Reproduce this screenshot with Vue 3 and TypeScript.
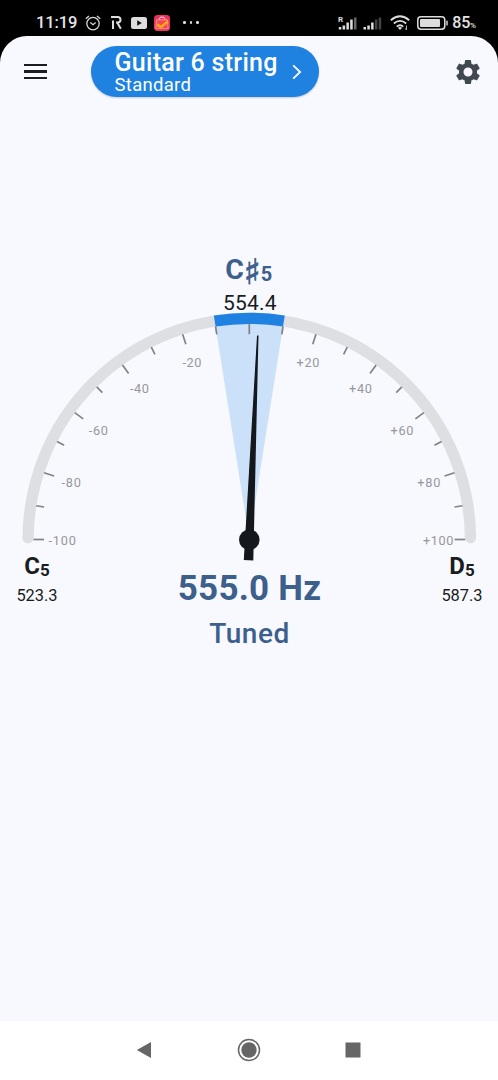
<script setup lang="ts">
interface Tick {
  value: number
  x1: number
  y1: number
  x2: number
  y2: number
}
interface ScaleLabel {
  text: string
  x: number
  y: number
  width: number
}

const cx = 249.3
const cy = 299.5
const radius = 221.2
const tickOuter = 215.8

function polar(cents: number, r: number): { x: number; y: number } {
  const a = (cents * 0.9 * Math.PI) / 180
  return { x: cx + r * Math.sin(a), y: cy + r * -Math.cos(a) }
}

function arc(from: number, to: number, r: number): string {
  const p = polar(from, r)
  const q = polar(to, r)
  return `M${p.x} ${p.y}A${r} ${r} 0 0 1 ${q.x} ${q.y}`
}

const ticks: Tick[] = Array.from({ length: 21 }, (_, i) => {
  const value = -100 + i * 10
  const length = value % 20 === 0 ? 10.5 : 8
  const p = polar(value, tickOuter)
  const q = polar(value, tickOuter - length)
  return { value, x1: p.x, y1: p.y, x2: q.x, y2: q.y }
})

const labels: ScaleLabel[] = [
  { text: '-20', x: 182.5, y: 126.5, width: 19 },
  { text: '-40', x: 130, y: 153, width: 19 },
  { text: '-60', x: 88.8, y: 194.5, width: 19 },
  { text: '-80', x: 61.5, y: 247, width: 19.5 },
  { text: '-100', x: 48.5, y: 305, width: 27.5 },
  { text: '+20', x: 296.5, y: 126.5, width: 23 },
  { text: '+40', x: 349, y: 153, width: 23 },
  { text: '+60', x: 390.5, y: 194.5, width: 23 },
  { text: '+80', x: 417.3, y: 247, width: 23 },
  { text: '+100', x: 423, y: 305, width: 30.5 },
]

const left = polar(-10, tickOuter)
const right = polar(10, tickOuter)
const sector = `M${cx} ${cy}L${left.x} ${left.y}A${tickOuter} ${tickOuter} 0 0 1 ${right.x} ${right.y}Z`
const barHeights = [4, 6, 9, 12, 14]
</script>

<template>
  <div class="phone">
    <header class="status">
      <span class="time">11:19</span>
      <svg class="alarm" width="16" height="16" viewBox="0 0 16 16" fill="none" stroke="#d8d8d8" stroke-width="1.3">
        <circle cx="8" cy="8.6" r="6.2" />
        <path d="M.8 3.7 4 1M12 1l3.2 2.7M5.3 7.6 8 9.7l2.7-2.1" />
      </svg>
      <svg class="rmark" width="11" height="13" viewBox="0 0 11 13" fill="none" stroke="#ddd" stroke-width="2">
        <path d="M0 1h6.7a2.7 2.7 0 0 1 0 5.6H5M2 4.5V13M6.2 6.6 9.8 12.8" />
      </svg>
      <svg class="video" width="16" height="12" viewBox="0 0 16 12">
        <rect width="16" height="12" rx="2.5" fill="#ddd" />
        <path d="M6.2 3.3 10.8 6 6.2 8.7Z" fill="#111" />
      </svg>
      <svg class="shop" width="16" height="16" viewBox="0 0 16 16">
        <rect width="16" height="16" rx="3.5" fill="#ee3158" />
        <path d="M5.3 5.5V3.8Q5.3 2 8 2t2.7 1.8v1.7" fill="none" stroke="#ffe3e6" stroke-width="1" />
        <path d="M2.6 4.8h10.8l.8 8.9H1.8Z" fill="#f2494f" stroke="#ff9fa8" stroke-width=".8" />
        <path d="m3.2 9.2 3.5 3L14 6.3" fill="none" stroke="#ffa51c" stroke-width="2.6" />
      </svg>
      <span class="dots"><i /><i /><i /></span>
      <span class="spacer" />
      <svg class="signal" width="20" height="16" viewBox="0 0 20 16">
        <rect v-for="(h, i) in barHeights" :key="i" :x="i * 3.8 + .8" :y="14.5 - (i === 0 ? 2.5 : h - 2)" width="2.5" :height="i === 0 ? 2.5 : h - 2" :fill="i === 4 ? '#666' : '#ddd'" />
        <text x="0" y="6.5" fill="#ddd" font-size="8" font-weight="700">R</text>
      </svg>
      <svg class="signal second" width="20" height="16" viewBox="0 0 20 16">
        <rect v-for="(h, i) in barHeights" :key="i" :x="i * 3.8 + .5" :y="14.5 - (i === 0 ? 2.5 : h - 2)" width="2.5" :height="i === 0 ? 2.5 : h - 2" :fill="i > 2 ? '#444' : '#ddd'" />
      </svg>
      <svg class="wifi" width="20" height="16" viewBox="0 0 20 16" fill="none" stroke="#ddd" stroke-width="1.8">
        <path d="M.8 5.2q9.2-7.8 18.4 0M3.8 8.5q6.2-5.3 12.4 0M6.7 11.6q3.3-2.6 6.6 0" />
        <path d="m7.8 12.7 2.2 2.4 2.2-2.4q-2.2-1.4-4.4 0Z" fill="#ddd" stroke="none" />
        <path d="M16.5 10.5v4.5M15 13.2l1.5 1.8" stroke="#aaa" stroke-width="1" />
      </svg>
      <svg class="battery" width="32" height="14" viewBox="0 0 32 14">
        <rect x=".8" y=".8" width="27" height="12.4" rx="3.2" fill="none" stroke="#ddd" stroke-width="1.5" />
        <rect x="3" y="3" width="20" height="8" rx="1" fill="#ddd" />
        <rect x="29.3" y="4.5" width="1.4" height="5" rx=".6" fill="#ddd" />
      </svg>
      <span class="percent">85<small>%</small></span>
    </header>

    <main class="app">
      <div class="toolbar">
        <button class="menu" aria-label="Menu"><i /><i /><i /></button>
        <button class="tuning">
          <span class="names">
            <span class="instrument">Guitar 6 string</span>
            <span class="preset">Standard</span>
          </span>
          <svg width="10" height="16" viewBox="0 0 10 16" fill="none" stroke="#fff" stroke-width="1.8">
            <path d="m1.2 1.4 6.9 6.6-6.9 6.6" />
          </svg>
        </button>
        <svg class="gear" width="30" height="30" viewBox="0 0 24 24" fill="#42484f">
          <path d="M19.14 12.94c.04-.3.06-.61.06-.94 0-.32-.02-.64-.07-.94l2.03-1.58c.18-.14.23-.41.12-.61l-1.92-3.32c-.12-.22-.37-.29-.59-.22l-2.39.96c-.5-.38-1.03-.7-1.62-.94l-.36-2.54c-.04-.24-.24-.41-.48-.41h-3.84c-.24 0-.43.17-.47.41l-.36 2.54c-.59.24-1.13.57-1.62.94l-2.39-.96c-.22-.08-.47 0-.59.22L2.74 8.87c-.12.21-.08.47.12.61l2.03 1.58c-.05.3-.09.63-.09.94s.02.64.07.94l-2.03 1.58c-.18.14-.23.41-.12.61l1.92 3.32c.12.22.37.29.59.22l2.39-.96c.5.38 1.03.7 1.62.94l.36 2.54c.05.24.24.41.48.41h3.84c.24 0 .44-.17.47-.41l.36-2.54c.59-.24 1.13-.56 1.62-.94l2.39.96c.22.08.47 0 .59-.22l1.92-3.32c.12-.22.07-.47-.12-.61l-2.01-1.58ZM12 15.6A3.6 3.6 0 1 1 12 8.4a3.6 3.6 0 0 1 0 7.2Z" />
        </svg>
      </div>

      <svg class="gauge" width="498" height="325" viewBox="0 0 498 325">
        <g class="target">
          <text x="225.3" y="38.5" font-size="28.5">C</text>
          <text class="sharp" x="243.8" y="44.2" font-size="35">♯</text>
          <text x="260.8" y="40.5" font-size="20">5</text>
        </g>
        <text class="target-hz" x="223" y="69.5" textLength="53.5">554.4</text>
        <path :d="arc(-99.5, 99.5, radius)" fill="none" stroke="#dedfe3" stroke-width="11.3" stroke-linecap="round" />
        <path :d="sector" fill="#cbe0f9" />
        <path :d="arc(-10, 10, radius)" fill="none" stroke="#1f82e0" stroke-width="11.3" />
        <line v-for="t in ticks" :key="t.value" :x1="t.x1" :y1="t.y1" :x2="t.x2" :y2="t.y2" stroke="#7f8287" stroke-width="1.7" />
        <text v-for="l in labels" :key="l.text" class="label" :x="l.x" :y="l.y" :textLength="l.width">{{ l.text }}</text>
        <path d="M257 95.5h1.5L253.3 320.4 243.8 320Z" fill="#14181d" />
        <circle :cx="cx" :cy="cy + .3" r="10.3" fill="#14181d" />
      </svg>

      <section class="readings">
        <div class="bound">
          <div class="note">C<sub>5</sub></div>
          <div class="hz">523.3</div>
        </div>
        <div class="current">
          <div class="frequency">555.0 Hz</div>
          <div class="state">Tuned</div>
        </div>
        <div class="bound">
          <div class="note">D<sub>5</sub></div>
          <div class="hz">587.3</div>
        </div>
      </section>
    </main>

    <nav class="system">
      <svg width="16" height="18" viewBox="0 0 16 18"><path d="M15 1v16L.8 9Z" fill="#666" /></svg>
      <svg width="24" height="24" viewBox="0 0 24 24"><circle cx="12" cy="12" r="10.5" fill="none" stroke="#666" stroke-width="1.5" /><circle cx="12" cy="12" r="7.7" fill="#666" /></svg>
      <svg width="16" height="16" viewBox="0 0 16 16"><rect x=".5" y=".5" width="15" height="15" fill="#666" /></svg>
    </nav>
  </div>
</template>

<style>
body { margin: 0; background: #000; }
</style>

<style scoped>
.phone { width: 498px; height: 1080px; display: flex; flex-direction: column; background: #000; font-family: Roboto, "Liberation Sans", sans-serif; overflow: hidden; }
.phone svg { display: block; flex: none; }
button { border: 0; padding: 0; font: inherit; text-align: left; }
.status { height: 36px; box-sizing: border-box; padding: 9px 22px 0 36px; display: flex; align-items: center; color: #e4e4e4; }
.time { width: 49px; font-size: 16.5px; font-weight: 500; letter-spacing: -.1px; }
.rmark { margin-left: 10px; }
.video { margin-left: 9px; }
.shop { margin-left: 7px; }
.dots { display: flex; gap: 4px; margin-left: 13px; }
.dots i { width: 2.6px; height: 2.6px; border-radius: 50%; background: #ddd; }
.spacer { flex: 1; }
.second { margin-left: 5px; }
.wifi { margin-left: 7px; }
.battery { margin-left: 7px; }
.percent { margin-left: 3px; font-size: 16px; font-weight: 500; letter-spacing: -.2px; white-space: nowrap; }
.percent small { font-size: 8px; letter-spacing: 0; }
.app { flex: 1; background: #f8f9fe; border-radius: 27px 27px 0 0; display: flex; flex-direction: column; }
.toolbar { height: 71px; box-sizing: border-box; padding: 0 15px 0 24px; display: flex; align-items: center; }
.menu { width: 23px; display: flex; flex-direction: column; gap: 4px; background: none; }
.menu i { height: 2.4px; background: #191c20; }
.tuning { margin-left: 44px; width: 228px; height: 51px; box-sizing: border-box; padding: 0 17px 0 23.5px; display: flex; align-items: center; justify-content: space-between; border-radius: 26px; background: #1f82e0; color: #fff; box-shadow: 0 1px 2px #0003; }
.names { display: flex; flex-direction: column; white-space: nowrap; padding-top: 3px; }
.instrument { font-size: 25px; line-height: 24px; font-weight: 500; letter-spacing: .28px; }
.preset { font-size: 18.5px; line-height: 20px; letter-spacing: .3px; }
.gear { margin-left: auto; }
.gauge { margin-top: 133px; }
.target { fill: #3c5f8c; font-weight: 700; }
.sharp { font-family: "DejaVu Sans", sans-serif; stroke: #3c5f8c; stroke-width: .8px; }
.target-hz { font-size: 21px; fill: #191c20; }
.label { font-size: 12.7px; fill: #94979c; }
.readings { display: flex; justify-content: space-between; padding: 0 15px 0 16px; margin-top: -15.5px; }
.bound { width: 42px; text-align: center; color: #191c20; }
.note { font-size: 24px; line-height: 32px; font-weight: 700; height: 34px; white-space: nowrap; }
.note sub { font-size: 17px; line-height: 0; vertical-align: -1.5px; }
.hz { font-size: 16.4px; line-height: 24px; }
.current { text-align: center; color: #3c5f8c; }
.frequency { font-size: 35px; font-weight: 700; line-height: 42px; padding-top: 18px; letter-spacing: .2px; }
.state { font-size: 28px; font-weight: 500; line-height: 34px; margin-top: 7px; letter-spacing: .5px; }
.system { height: 59px; box-sizing: border-box; background: #fff; display: flex; align-items: center; justify-content: space-between; padding: 0 137px 1px 136px; }
.system svg:nth-child(2) { margin-left: 1px; }
</style>
